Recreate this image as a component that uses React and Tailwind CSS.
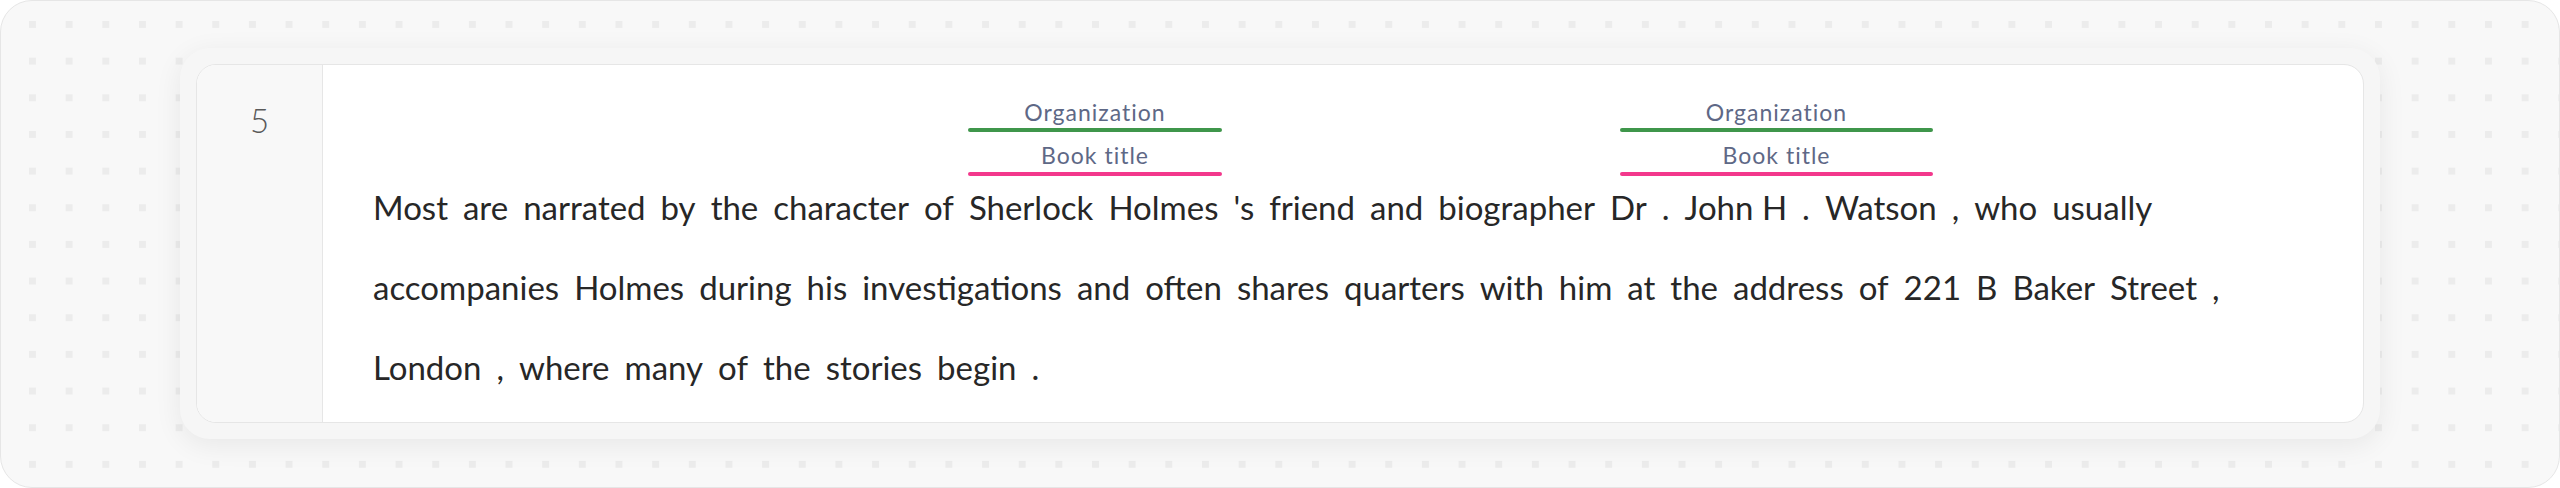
import React from 'react';

// tokens as the annotator splits them ("John H" is one token)
const tokens = [
  'Most', 'are', 'narrated', 'by', 'the', 'character', 'of', 'Sherlock', 'Holmes', "'s", 'friend', 'and',
  'biographer', 'Dr', '.', 'John H', '.', 'Watson', ',', 'who', 'usually', 'accompanies', 'Holmes', 'during',
  'his', 'investigations', 'and', 'often', 'shares', 'quarters', 'with', 'him', 'at', 'the', 'address', 'of',
  '221', 'B', 'Baker', 'Street', ',', 'London', ',', 'where', 'many', 'of', 'the', 'stories', 'begin', '.',
];

const Annotation = ({ className }) => (
  <div className={`absolute top-[34px] flex flex-col ${className}`}>
    <div className="h-[26px] text-center text-[23px] leading-[26px] tracking-[1px] text-[#5e6886]">Organization</div>
    <div className="mt-[3px] h-[4px] rounded-full bg-[#3f964b]"></div>
    <div className="mt-[10px] h-[26px] text-center text-[23px] leading-[26px] tracking-[1px] text-[#5e6886]">Book title</div>
    <div className="mt-[4px] h-[4px] rounded-full bg-[#f3388c]"></div>
  </div>
);

export default function App() {
  return (
    <div className="w-[2560px] font-['Lato','Noto_Sans',sans-serif]">
      <div className="rounded-[32px] border border-[#e6e6e6] bg-[#f8f8f8] bg-[conic-gradient(at_7px_7px,transparent_75%,#ececec_0)] bg-[length:36.67px_36.67px] bg-[position:28px_20px] px-[179px] pt-[47px] pb-[48px]">
        <div className="h-[391px] rounded-[30px] bg-[#f6f6f6] p-[16px] shadow-[0_6px_28px_rgba(0,0,0,0.07)]">
          <div className="flex h-full overflow-hidden rounded-[20px] border border-[#e6e6e6] bg-white">
            {/* line number gutter */}
            <div className="w-[126px] shrink-0 border-r border-[#e6e6e6] bg-[#f8f8f8] pt-[35px] text-center text-[33px] leading-[40px] font-light text-[#5a5a5a]">
              5
            </div>

            {/* sentence with annotation labels */}
            <div className="relative flex-1 pt-[102px] pl-[50px] pr-[60px]">
              <Annotation className="left-[645px] w-[254px]" />
              <Annotation className="left-[1297px] w-[313px]" />
              <div className="flex flex-wrap gap-x-[15px] text-[33px] leading-[80px] text-[#272727]">
                {tokens.map((t, i) => (
                  <span key={i} className="whitespace-pre">{t}</span>
                ))}
              </div>
            </div>
          </div>
        </div>
      </div>
    </div>
  );
}
